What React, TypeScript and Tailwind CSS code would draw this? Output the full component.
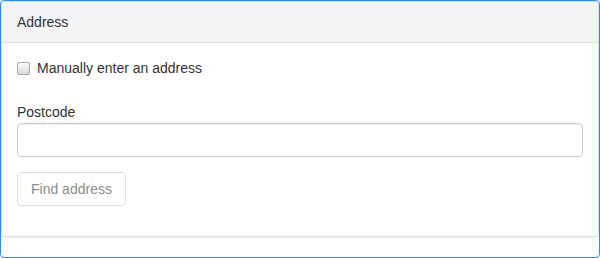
import React, { useState } from 'react';

function App() {
  const [manual, setManual] = useState(false);
  const [postcode, setPostcode] = useState('');

  return (
    <div className="w-[600px] h-[258px] border border-[#1e90ff] rounded-[4px] bg-white font-['Liberation_Sans',Arial,sans-serif] text-[14px] leading-[20px] text-[#333]">
      {/* Address panel */}
      <div className="border border-[#ddd] rounded-[4px] bg-white mb-[20px] shadow-[0_1px_1px_rgba(0,0,0,0.05)]">
        <div className="bg-[#f5f5f5] border-b border-[#ddd] rounded-t-[3px] px-[15px] py-[10px]">
          Address
        </div>
        <div className="p-[15px]">
          <label className="flex items-center h-[20px] cursor-pointer">
            <input
              type="checkbox"
              checked={manual}
              onChange={e => setManual(e.target.checked)}
              className="appearance-none w-[13px] h-[13px] m-0 mt-[1px] border border-[#a6a6a6] rounded-[2px] bg-gradient-to-b from-[#fafafa] to-[#dcdcdc] checked:bg-[#1e90ff]"
            />
            <span className="ml-[7px]">Manually enter an address</span>
          </label>

          <div className="mt-[24px]">
            <label className="block mb-[1px]">Postcode</label>
            <input
              type="text"
              value={postcode}
              onChange={e => setPostcode(e.target.value)}
              className="block w-full h-[34px] px-[12px] border border-[#ccc] rounded-[4px] shadow-[inset_0_1px_1px_rgba(0,0,0,0.075)] outline-none"
            />
          </div>

          <div className="mt-[15px] mb-[15px]">
            <button
              type="button"
              disabled={!postcode}
              className="h-[34px] pl-[13px] pr-[13px] border border-[#dedede] rounded-[4px] bg-white text-[#8c8c8c]"
            >
              Find address
            </button>
          </div>
        </div>
      </div>
    </div>
  );
}

export default App;
